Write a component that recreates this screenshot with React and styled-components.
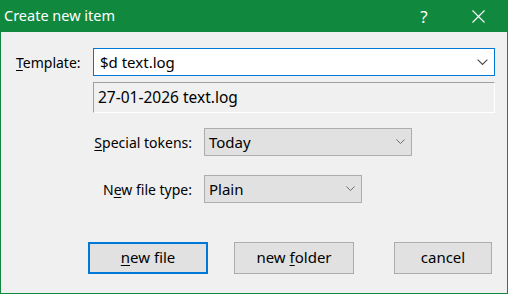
import React, { useState } from 'react';
import styled, { createGlobalStyle } from 'styled-components';

const GlobalStyle = createGlobalStyle`
  html, body {
    margin: 0;
    padding: 0;
    background: #f0f0f0;
  }
  body {
    font-family: "Noto Sans", "Segoe UI", sans-serif;
    font-size: 14px;
    color: #000;
  }
`;

const Window = styled.div`
  width: 508px;
  height: 294px;
  box-sizing: border-box;
  border: 1px solid #10893e;
  border-top: none;
  background: #f0f0f0;
  display: flex;
  flex-direction: column;
`;

const TitleBar = styled.div`
  height: 32px;
  margin: 0 -1px;
  background: #10893e;
  color: #fff;
  display: flex;
  align-items: center;
  padding: 0 7px 0 4px;
  font-size: 14.5px;
  flex-shrink: 0;
`;

const Title = styled.div`
  flex: 1;
  padding-bottom: 2px;
`;

const TitleButton = styled.div`
  width: 46px;
  height: 32px;
  margin-left: ${p => p.gap || 0}px;
  display: flex;
  align-items: center;
  justify-content: center;
  font-size: 17px;
`;

const Body = styled.div`
  padding: 16px 12px 0 15px;
  display: flex;
  flex-direction: column;
`;

const TemplateRow = styled.div`
  display: grid;
  grid-template-columns: 77px 402px;
  row-gap: 6px;
  align-items: center;
`;

const Label = styled.label`
  white-space: nowrap;
  text-align: ${p => (p.right ? 'right' : 'left')};
`;

const Key = styled.span`
  text-decoration: underline;
  text-underline-offset: 2px;
`;

const ComboInput = styled.div`
  height: 28px;
  box-sizing: border-box;
  border: 1px solid #0078d7;
  background: #fff;
  display: flex;
  align-items: center;
  padding: 0 6px 0 6px;
  font-size: 15px;
`;

const ComboText = styled.span`
  flex: 1;
`;

const Preview = styled.div`
  grid-column: 2;
  height: 31px;
  box-sizing: border-box;
  border-top: 1px solid #a0a0a0;
  border-left: 1px solid #a0a0a0;
  border-right: 1px solid #fff;
  border-bottom: 1px solid #fff;
  display: flex;
  align-items: center;
  padding-left: 4px;
  padding-bottom: 2px;
  font-size: 15.5px;
`;

const OptionRow = styled.div`
  display: grid;
  grid-template-columns: 176px auto;
  column-gap: 12px;
  align-items: center;
  margin-top: ${p => p.gap}px;
`;

const Select = styled.div`
  width: ${p => p.width}px;
  height: 28px;
  box-sizing: border-box;
  border: 1px solid #adadad;
  background: #e1e1e1;
  display: flex;
  align-items: center;
  padding: 0 6px 0 4px;
  font-size: 15px;
`;

const ButtonBar = styled.div`
  display: flex;
  margin-top: 39px;
  padding-left: 72px;
`;

const Button = styled.button`
  width: ${p => p.width}px;
  height: 32px;
  margin-right: ${p => p.gap || 0}px;
  box-sizing: border-box;
  border: ${p => (p.primary ? '2px solid #0078d7' : '1px solid #adadad')};
  background: #e1e1e1;
  font-family: inherit;
  font-size: 15px;
  color: #000;
  padding: 0 0 2px;
`;

const Chevron = ({ w = 10, color = '#404040' }) => (
  <svg width={w} height={w / 2 + 1} viewBox="0 0 10 6" fill="none">
    <path d="M0.5 0.5 L5 5 L9.5 0.5" stroke={color} strokeWidth="1" />
  </svg>
);

const CloseIcon = () => (
  <svg width="13" height="13" viewBox="0 0 13 13">
    <path d="M0.5 0.5 L12.5 12.5 M12.5 0.5 L0.5 12.5" stroke="#fff" strokeWidth="1.1" />
  </svg>
);

const App = () => {
  const [template] = useState('$d text.log');
  const preview = '27-01-2026 text.log';

  return (
    <>
      <GlobalStyle />
      <Window>
        <TitleBar>
          <Title>Create new item</Title>
          <TitleButton>?</TitleButton>
          <TitleButton gap={8}>
            <CloseIcon />
          </TitleButton>
        </TitleBar>
        <Body>
          <TemplateRow>
            <Label>
              <Key>T</Key>emplate:
            </Label>
            <ComboInput>
              <ComboText>{template}</ComboText>
              <Chevron w={11} />
            </ComboInput>
            <Preview>{preview}</Preview>
          </TemplateRow>

          <OptionRow gap={15}>
            <Label right>
              <Key>S</Key>pecial tokens:
            </Label>
            <Select width={208}>
              <ComboText>Today</ComboText>
              <Chevron w={9} color="#606060" />
            </Select>
          </OptionRow>

          <OptionRow gap={19}>
            <Label right>
              N<Key>e</Key>w file type:
            </Label>
            <Select width={158}>
              <ComboText>Plain</ComboText>
              <Chevron w={9} color="#606060" />
            </Select>
          </OptionRow>

          <ButtonBar>
            <Button primary width={120} gap={26}>
              <Key>n</Key>ew file
            </Button>
            <Button width={120} gap={40}>
              new <Key>f</Key>older
            </Button>
            <Button width={98}>cancel</Button>
          </ButtonBar>
        </Body>
      </Window>
    </>
  );
};

export default App;
